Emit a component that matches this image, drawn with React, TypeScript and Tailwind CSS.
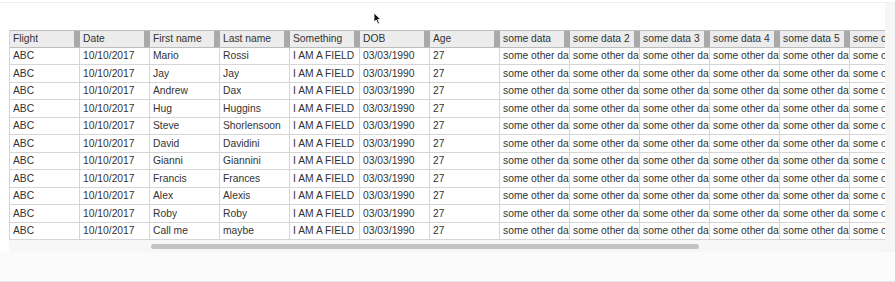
import React from "react"

const headers = [
  "Flight",
  "Date",
  "First name",
  "Last name",
  "Something",
  "DOB",
  "Age",
  "some data",
  "some data 2",
  "some data 3",
  "some data 4",
  "some data 5",
  "some data 6",
]

const people = [
  ["Mario", "Rossi"],
  ["Jay", "Jay"],
  ["Andrew", "Dax"],
  ["Hug", "Huggins"],
  ["Steve", "Shorlensoon"],
  ["David", "Davidini"],
  ["Gianni", "Giannini"],
  ["Francis", "Frances"],
  ["Alex", "Alexis"],
  ["Roby", "Roby"],
  ["Call me", "maybe"],
]

const rows = people.map(([first, last]) => [
  "ABC",
  "10/10/2017",
  first,
  last,
  "I AM A FIELD",
  "03/03/1990",
  "27",
  "some other data",
  "some other data",
  "some other data",
  "some other data",
  "some other data",
  "some other data",
])

export default function App() {
  return (
    <div
      className="relative w-[895px] h-[282px] bg-[#fbfbfb] border-b border-[#e6e6e6] overflow-hidden text-[#333] text-[10.3px]"
      style={{ fontFamily: '"Liberation Sans", Arial, sans-serif' }}
    >
      <div className="h-[3px] border-b border-[#efefef] bg-white" />
      <div className="flex bg-white">
        <div className="ml-[9px] mt-[27px] w-[876px] overflow-hidden">
          <div className="w-max border-l border-[#d4d4d4]">
            <div className="flex h-[17.5px] bg-[#ececec] border-t border-b border-[#bdbdbd]">
              {headers.map(h => (
                <div key={h} className="w-[70px] shrink-0 flex items-center justify-between">
                  <span className="pl-[3px] whitespace-nowrap overflow-hidden">{h}</span>
                  <span className="w-[6px] h-full bg-[#a9a9a9]" />
                </div>
              ))}
            </div>
            {rows.map((r, i) => (
              <div key={i} className="flex h-[17.5px] bg-white border-b border-[#d6d6d6]">
                {r.map((c, j) => (
                  <div
                    key={j}
                    className="w-[70px] shrink-0 border-r border-[#d6d6d6] pl-[3px] flex items-center overflow-hidden"
                  >
                    <span className="whitespace-nowrap overflow-hidden">{c}</span>
                  </div>
                ))}
              </div>
            ))}
          </div>
          <div className="h-[12px] bg-[#f7f7f7] flex items-center">
            <div className="ml-[142px] w-[548px] h-[5px] rounded-full bg-[#c3c3c3]" />
          </div>
        </div>
        <div className="flex-1 bg-[#f6f6f6]" />
      </div>
      <svg className="absolute left-[373px] top-[12px]" width="9" height="13" viewBox="0 0 9 13">
        <path d="M1 1 L1 10 L3.2 8 L5 12 L6.5 11.3 L4.8 7.5 L7.8 7.5 Z" fill="#111" stroke="#fff" strokeWidth="0.8" />
      </svg>
    </div>
  )
}
